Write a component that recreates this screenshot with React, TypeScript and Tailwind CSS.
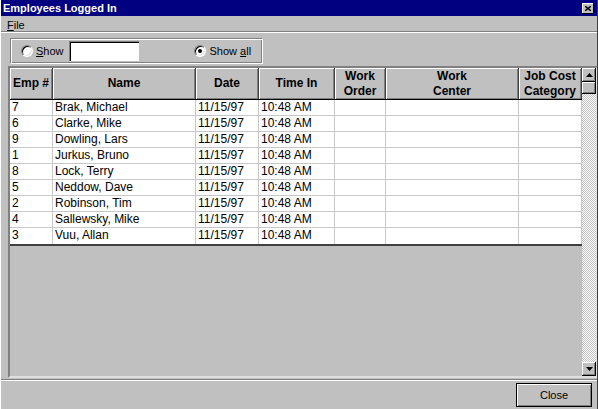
const columns = [
  { key: 'emp', label: ['Emp #'], width: 'w-[43px]' },
  { key: 'name', label: ['Name'], width: 'w-[143px]' },
  { key: 'date', label: ['Date'], width: 'w-[63px]' },
  { key: 'time', label: ['Time In'], width: 'w-[76px]' },
  { key: 'order', label: ['Work', 'Order'], width: 'w-[51px]' },
  { key: 'center', label: ['Work', 'Center'], width: 'w-[133px]' },
  { key: 'category', label: ['Job Cost', 'Category'], width: 'w-[63px]' },
]

const employees = [
  { emp: '7', name: 'Brak, Michael' },
  { emp: '6', name: 'Clarke, Mike' },
  { emp: '9', name: 'Dowling, Lars' },
  { emp: '1', name: 'Jurkus, Bruno' },
  { emp: '8', name: 'Lock, Terry' },
  { emp: '5', name: 'Neddow, Dave' },
  { emp: '2', name: 'Robinson, Tim' },
  { emp: '4', name: 'Sallewsky, Mike' },
  { emp: '3', name: 'Vuu, Allan' },
].map((e) => ({ ...e, date: '11/15/97', time: '10:48 AM', order: '', center: '', category: '' }))

function Radio({ checked }: { checked?: boolean }) {
  return (
    <span className="relative w-[12px] h-[12px] rounded-full bg-white border border-t-[#808080] border-l-[#808080] border-b-white border-r-white shadow-[inset_1px_1px_0_#000,inset_-1px_-1px_0_#dfdfdf] flex items-center justify-center">
      {checked && <span className="w-[4px] h-[4px] rounded-full bg-black" />}
    </span>
  )
}

function Arrow({ up }: { up?: boolean }) {
  return (
    <div className="h-[14px] w-full bg-[#c0c0c0] shadow-[inset_-1px_-1px_0_#000,inset_1px_1px_0_#fff,inset_-2px_-2px_0_#808080] flex items-center justify-center">
      <svg width="7" height="4" viewBox="0 0 7 4">
        <polygon points={up ? '3.5,0 7,4 0,4' : '0,0 7,0 3.5,4'} fill="#000" />
      </svg>
    </div>
  )
}

export default function App() {
  return (
    <div className="w-[598px] h-[409px] bg-[#c0c0c0] flex flex-col overflow-hidden text-black font-['Liberation_Sans',Arial,sans-serif] border-l border-l-white border-r border-r-[#404040]">
      {/* Title bar */}
      <div className="h-[16px] bg-[#000080] flex items-center justify-between pl-[2px] pr-[3px]">
        <span className="text-white font-bold text-[11px] leading-none">Employees Logged In</span>
        <div className="w-[12px] h-[11px] bg-[#c0c0c0] shadow-[inset_-1px_-1px_0_#000,inset_1px_1px_0_#fff] flex items-center justify-center">
          <svg width="6" height="5" viewBox="0 0 6 5">
            <path d="M0 0L6 5M6 0L0 5" stroke="#000" strokeWidth="1.4" />
          </svg>
        </div>
      </div>

      {/* Menu */}
      <div className="h-[15px] flex items-center pt-[3px] pl-[6px] text-[11px] leading-none">
        <span><span className="underline">F</span>ile</span>
      </div>
      <div className="h-[2px] border-t border-t-[#808080] border-b border-b-white" />

      {/* Options */}
      <div className="h-[33px] pt-[5px] pl-[9px]">
        <div className="w-[253px] h-[26px] border border-t-[#808080] border-l-[#808080] border-b-white border-r-white shadow-[inset_1px_1px_0_#fff,inset_-1px_-1px_0_#808080] flex items-center pl-[10px] text-[11px]">
          <Radio />
          <span className="ml-[3px]"><span className="underline">S</span>how</span>
          <div className="ml-[5px] w-[70px] h-[20px] bg-white shadow-[inset_1px_1px_0_#808080,inset_2px_2px_0_#000,inset_-1px_-1px_0_#fff]" />
          <div className="ml-[55px] flex items-center">
            <Radio checked />
            <span className="ml-[4px]">Show <span className="underline">a</span>ll</span>
          </div>
        </div>
      </div>

      {/* Grid */}
      <div className="ml-[7px] w-[590px] h-[312px] border-2 border-t-[#808080] border-l-[#808080] border-b-[#dfdfdf] border-r-[#dfdfdf] flex shadow-[inset_1px_1px_0_#000]">
        <div className="w-[572px] flex flex-col">
          <div className="h-[32px] flex border-b border-b-black">
            {columns.map((c) => (
              <div
                key={c.key}
                className={`${c.width} shrink-0 h-full bg-[#c0c0c0] border-r border-r-[#404040] shadow-[inset_1px_1px_0_#fff,inset_-1px_-1px_0_#808080] flex flex-col items-center justify-center font-bold text-[12px] leading-[15px]`}
              >
                {c.label.map((l) => (
                  <span key={l}>{l}</span>
                ))}
              </div>
            ))}
          </div>
          <div className="bg-white border-b-2 border-b-[#404040]">
            {employees.map((e) => (
              <div key={e.emp} className="h-[16px] flex border-b border-b-[#c8c8c8] last:border-b-0">
                {columns.map((c) => (
                  <div
                    key={c.key}
                    className={`${c.width} shrink-0 border-r border-r-[#c8c8c8] pl-[2px] text-[12px] leading-[15px] whitespace-nowrap overflow-hidden`}
                  >
                    {e[c.key as keyof typeof e]}
                  </div>
                ))}
              </div>
            ))}
          </div>
          <div className="flex-1 bg-[#c0c0c0]" />
        </div>

        {/* Scrollbar */}
        <div className="w-[14px] flex flex-col bg-[repeating-conic-gradient(#ffffff_0_25%,#c0c0c0_0_50%)] bg-[length:2px_2px]">
          <Arrow up />
          <div className="h-[12px] bg-[#c0c0c0] shadow-[inset_-1px_-1px_0_#000,inset_1px_1px_0_#fff,inset_-2px_-2px_0_#808080]" />
          <div className="flex-1" />
          <Arrow />
        </div>
      </div>

      {/* Bottom */}
      <div className="mt-[1px] h-[2px] border-t border-t-[#808080] border-b border-b-white" />
      <div className="flex-1 flex justify-end items-start pt-[2px] pr-[5px]">
        <button className="w-[76px] h-[24px] bg-[#c0c0c0] border border-black shadow-[inset_1px_1px_0_#fff,inset_-1px_-1px_0_#808080] text-[11px] flex items-center justify-center">
          <span>Close</span>
        </button>
      </div>
    </div>
  )
}
